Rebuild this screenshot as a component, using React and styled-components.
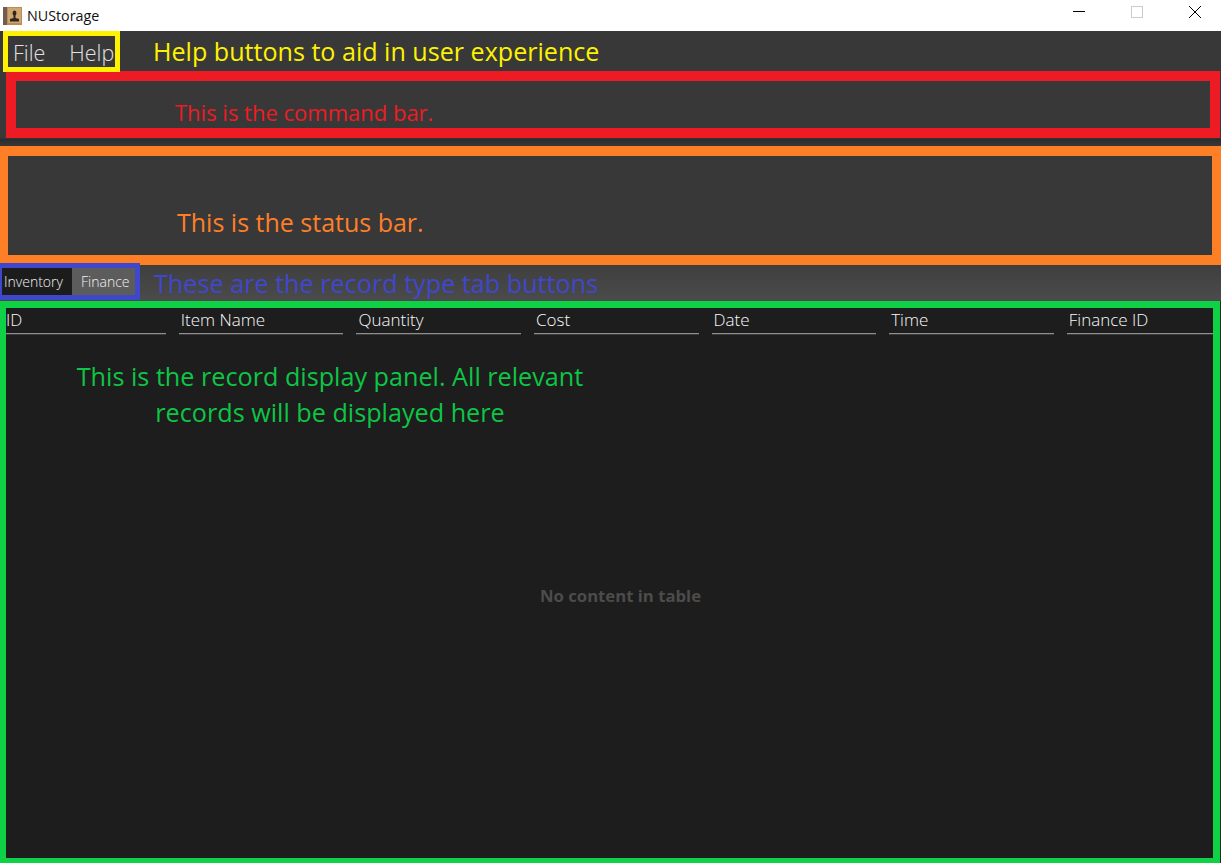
import React from 'react';
import styled, {createGlobalStyle} from 'styled-components';

const Global = createGlobalStyle`
    html, body {
        margin: 0;
        padding: 0;
        background: #2a2a2a;
    }
    * {
        box-sizing: border-box;
    }
`;

const Page = styled.div`
    width: 1221px;
    height: 863px;
    overflow: hidden;
    font-family: "Open Sans", "Noto Sans", sans-serif;
    display: flex;
    flex-direction: column;
`;

const TitleBar = styled.div`
    height: 31px;
    flex: none;
    background: #ffffff;
    display: flex;
    align-items: center;
    padding-left: 3px;
    color: #111111;
    font-size: 14.3px;
`;

const TitleText = styled.span`
    margin-left: 5px;
    flex: 1;
`;

const WinControls = styled.div`
    display: flex;
    align-items: center;
    gap: 46px;
    padding: 0 20px 7px 0;
`;

const MenuRow = styled.div`
    height: 40px;
    flex: none;
    background: #383838;
    display: flex;
    position: relative;
    z-index: 1;
`;

const MenuBox = styled.div`
    width: 117px;
    height: 41px;
    margin-left: 3px;
    border: 5px solid #fff200;
    display: flex;
    align-items: center;
    gap: 24px;
    padding-left: 5px;
    padding-top: 2px;
    color: #e2e2e2;
    font-size: 21.5px;
    font-weight: 300;
    white-space: nowrap;
    overflow: hidden;
`;

const Note = styled.div`
    color: ${p => p.$color};
    font-size: ${p => p.$size}px;
    line-height: 1.2;
`;

const HelpNote = styled(Note)`
    margin-left: 33px;
    align-self: center;
    padding-top: 1px;
`;

const CommandArea = styled.div`
    height: 75px;
    flex: none;
    background: linear-gradient(#383838 0, #383838 67px, #2b2b2b 68px, #383838 75px);
    padding-left: 6px;
`;

const CommandBox = styled.div`
    width: 1214px;
    height: 67px;
    border: 10px solid #ed1c24;
    background: #383838;
    padding: 18px 0 0 159px;
`;

const StatusBox = styled.div`
    height: 119px;
    flex: none;
    border: solid #ff7f27;
    border-width: 10px 9px 10px 8px;
    background: #383838;
    padding: 51px 0 0 169px;
`;

const TabRow = styled.div`
    height: 36px;
    flex: none;
    background: linear-gradient(#3f3f3f, #4b4b4b);
    display: flex;
    align-items: flex-start;
`;

const TabBox = styled.div`
    width: 140px;
    height: 37px;
    margin-top: -2px;
    border: solid #3f48cc;
    border-width: 5px 5px 5px 2px;
    display: flex;
    flex: none;
    position: relative;
`;

const Tab = styled.div`
    width: ${p => p.$width}px;
    background: ${p => p.$active ? '#1c1c1c' : '#5c5c5c'};
    color: #f2f2f2;
    font-size: 14px;
    font-weight: 300;
    display: flex;
    align-items: center;
    padding-left: ${p => p.$pad}px;
`;

const TabNote = styled(Note)`
    margin-left: 14px;
    padding-top: 3px;
`;

const RecordPanel = styled.div`
    flex: 1;
    min-height: 0;
    margin-right: 1px;
    border: solid #0ed145;
    border-width: 7px 7px 5px 6px;
    background: #1d1d1d;
    display: flex;
    flex-direction: column;
    position: relative;
`;

const HeaderRow = styled.div`
    display: grid;
    height: 26px;
    flex: none;
    grid-template-columns: 159.8px repeat(5, 164.6px) 1fr;
    column-gap: 13px;
`;

const HeaderCell = styled.div`
    border-bottom: 1px solid #8e8e8e;
    box-shadow: 0 1px 0 #3c3c3c;
    color: #fafafa;
    font-size: 17px;
    font-weight: 300;
    line-height: 24px;
    padding-left: ${p => p.$first ? 0 : 2}px;
    white-space: nowrap;
`;

const PanelNote = styled(Note)`
    margin: 24px 0 0 0;
    width: 648px;
    text-align: center;
    line-height: 36px;
`;

const EmptyText = styled.div`
    position: absolute;
    left: 534px;
    top: 276px;
    color: #4c4c4c;
    font-size: 16.7px;
    font-weight: 700;
`;

const COLUMNS = ['ID', 'Item Name', 'Quantity', 'Cost', 'Date', 'Time', 'Finance ID'];

function AppIcon() {
    return (
        <svg width="19" height="18" viewBox="0 0 19 18">
            <rect x="0" y="0" width="19" height="18" fill="#b98c58" />
            <rect x="0" y="0" width="4" height="18" fill="#6f5f50" />
            <rect x="5" y="1" width="13" height="15" fill="#cfa672" />
            <ellipse cx="11.5" cy="6" rx="2" ry="2.5" fill="#33261a" />
            <path d="M10.5 8h2v3l3.5 1v2.5h-9v-2.5l3.5-1z" fill="#33261a" />
        </svg>
    );
}

function WindowButtons() {
    return (
        <WinControls>
            <svg width="12" height="12" viewBox="0 0 12 12">
                <path d="M0 5.5h12" stroke="#000" strokeWidth="1" />
            </svg>
            <svg width="12" height="12" viewBox="0 0 12 12">
                <rect x="0.5" y="0.5" width="11" height="11" fill="none" stroke="#cccccc" />
            </svg>
            <svg width="12" height="12" viewBox="0 0 12 12">
                <path d="M0 0L12 12M12 0L0 12" stroke="#000" strokeWidth="1" />
            </svg>
        </WinControls>
    );
}

export default function App() {
    return (
        <Page>
            <Global />
            <TitleBar>
                <AppIcon />
                <TitleText>NUStorage</TitleText>
                <WindowButtons />
            </TitleBar>
            <MenuRow>
                <MenuBox>
                    <span>File</span>
                    <span>Help</span>
                </MenuBox>
                <HelpNote $color="#fff200" $size={25.1}>Help buttons to aid in user experience</HelpNote>
            </MenuRow>
            <CommandArea>
                <CommandBox>
                    <Note $color="#ed1c24" $size={22}>This is the command bar.</Note>
                </CommandBox>
            </CommandArea>
            <StatusBox>
                <Note $color="#ff7f27" $size={25}>This is the status bar.</Note>
            </StatusBox>
            <TabRow>
                <TabBox>
                    <Tab $active $width={70} $pad={2}>Inventory</Tab>
                    <Tab $width={63} $pad={9}>Finance</Tab>
                </TabBox>
                <TabNote $color="#3f48cc" $size={25.2}>These are the record type tab buttons</TabNote>
            </TabRow>
            <RecordPanel>
                <HeaderRow>
                    {COLUMNS.map((name, i) => (
                        <HeaderCell key={name} $first={i === 0}>{name}</HeaderCell>
                    ))}
                </HeaderRow>
                <PanelNote $color="#0ec545" $size={25.2}>
                    This is the record display panel. All relevant<br />records will be displayed here
                </PanelNote>
                <EmptyText>No content in table</EmptyText>
            </RecordPanel>
        </Page>
    );
}
